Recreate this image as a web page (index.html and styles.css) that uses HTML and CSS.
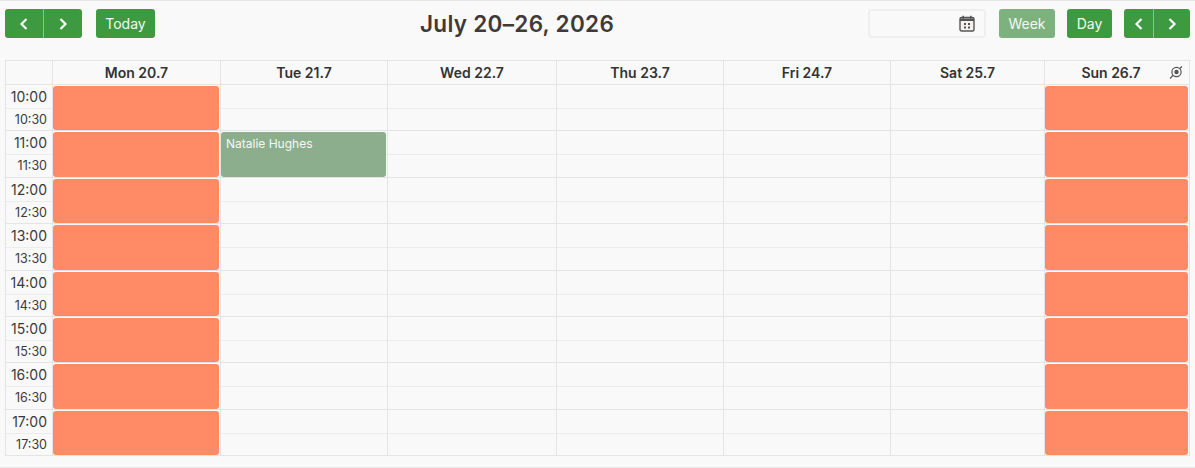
FILE: index.html
```html
<!DOCTYPE html>
<html lang="en">
<head>
    <meta charset="UTF-8">
    <meta name="viewport" content="width=device-width, initial-scale=1.0">
    <title>Calendar</title>
    <link rel="stylesheet" href="styles.css">
</head>
<body>
    <div class="page">
        <div class="toolbar">
            <div class="btn-group">
                <button class="btn btn-prev"><svg width="10" height="14" viewBox="0 0 10 14"><path d="M7.5 2 2.5 7l5 5" /></svg></button>
                <button class="btn btn-next"><svg width="10" height="14" viewBox="0 0 10 14"><path d="M2.5 2l5 5-5 5" /></svg></button>
            </div>
            <button class="btn btn-today">Today</button>
            <h1 class="title">July 20–26, 2026</h1>
            <div class="date-input">
                <svg width="16" height="17" viewBox="0 0 16 17">
                    <rect x="1" y="2.5" width="14" height="13.5" rx="1.5" fill="#f5f2ee" stroke="#555" stroke-width="1.4" />
                    <path d="M1 3.5h14v2.5H1z" fill="#555" />
                    <path d="M4.2 .8v3M11.8 .8v3" stroke="#555" stroke-width="1.6" />
                    <path d="M5 8h2v2H5zM9 8h2v2H9zM5 11.5h2v2H5zM9 11.5h2v2H9z" fill="#555" />
                </svg>
            </div>
            <button class="btn btn-week">Week</button>
            <button class="btn btn-day">Day</button>
            <div class="btn-group">
                <button class="btn btn-prev btn-prev-small"><svg width="10" height="14" viewBox="0 0 10 14"><path d="M7.5 2 2.5 7l5 5" /></svg></button>
                <button class="btn btn-next btn-next-small"><svg width="10" height="14" viewBox="0 0 10 14"><path d="M2.5 2l5 5-5 5" /></svg></button>
            </div>
        </div>

        <div class="calendar">
            <div class="col col-time">
                <div class="col-head"></div>
                <div class="hour"><span class="time">10:00</span><span class="time time-half">10:30</span></div>
                <div class="hour"><span class="time">11:00</span><span class="time time-half">11:30</span></div>
                <div class="hour"><span class="time">12:00</span><span class="time time-half">12:30</span></div>
                <div class="hour"><span class="time">13:00</span><span class="time time-half">13:30</span></div>
                <div class="hour"><span class="time">14:00</span><span class="time time-half">14:30</span></div>
                <div class="hour"><span class="time">15:00</span><span class="time time-half">15:30</span></div>
                <div class="hour"><span class="time">16:00</span><span class="time time-half">16:30</span></div>
                <div class="hour"><span class="time">17:00</span><span class="time time-half">17:30</span></div>
            </div>
            <div class="col col-mon">
                <div class="col-head">Mon 20.7</div>
                <div class="hour"><div class="closed"></div></div>
                <div class="hour"><div class="closed"></div></div>
                <div class="hour"><div class="closed"></div></div>
                <div class="hour"><div class="closed"></div></div>
                <div class="hour"><div class="closed"></div></div>
                <div class="hour"><div class="closed"></div></div>
                <div class="hour"><div class="closed"></div></div>
                <div class="hour"><div class="closed"></div></div>
            </div>
            <div class="col col-tue">
                <div class="col-head">Tue 21.7</div>
                <div class="hour"></div>
                <div class="hour"><div class="booking">Natalie Hughes</div></div>
                <div class="hour"></div>
                <div class="hour"></div>
                <div class="hour"></div>
                <div class="hour"></div>
                <div class="hour"></div>
                <div class="hour"></div>
            </div>
            <div class="col col-wed">
                <div class="col-head">Wed 22.7</div>
                <div class="hour"></div>
                <div class="hour"></div>
                <div class="hour"></div>
                <div class="hour"></div>
                <div class="hour"></div>
                <div class="hour"></div>
                <div class="hour"></div>
                <div class="hour"></div>
            </div>
            <div class="col col-thu">
                <div class="col-head">Thu 23.7</div>
                <div class="hour"></div>
                <div class="hour"></div>
                <div class="hour"></div>
                <div class="hour"></div>
                <div class="hour"></div>
                <div class="hour"></div>
                <div class="hour"></div>
                <div class="hour"></div>
            </div>
            <div class="col col-fri">
                <div class="col-head">Fri 24.7</div>
                <div class="hour"></div>
                <div class="hour"></div>
                <div class="hour"></div>
                <div class="hour"></div>
                <div class="hour"></div>
                <div class="hour"></div>
                <div class="hour"></div>
                <div class="hour"></div>
            </div>
            <div class="col col-sat">
                <div class="col-head">Sat 25.7</div>
                <div class="hour"></div>
                <div class="hour"></div>
                <div class="hour"></div>
                <div class="hour"></div>
                <div class="hour"></div>
                <div class="hour"></div>
                <div class="hour"></div>
                <div class="hour"></div>
            </div>
            <div class="col col-sun">
                <div class="col-head col-head-sync">Sun 26.7
                    <svg class="sync" width="14" height="15" viewBox="0 0 14 15" fill="none" stroke="#555" stroke-width="1.2">
                        <circle cx="7.5" cy="7" r="4.6" />
                        <path d="M1 13.5 4.2 10.2M10.5 3.8 13 1.5" />
                        <circle cx="7.5" cy="7" r="1.6" fill="#555" />
                    </svg>
                </div>
                <div class="hour"><div class="closed"></div></div>
                <div class="hour"><div class="closed"></div></div>
                <div class="hour"><div class="closed"></div></div>
                <div class="hour"><div class="closed"></div></div>
                <div class="hour"><div class="closed"></div></div>
                <div class="hour"><div class="closed"></div></div>
                <div class="hour"><div class="closed"></div></div>
                <div class="hour"><div class="closed"></div></div>
            </div>
        </div>
    </div>
</body>
</html>
```

FILE: styles.css
```css
html, body {
    margin: 0;
    height: 100%;
}
body {
    font-family: "Inter", "Open Sans", sans-serif;
    background-color: #f9f9f9;
    color: #333;
    overflow: hidden;
}
.page {
    height: 468px;
    box-sizing: border-box;
    padding: 8px 5px 0 5px;
    border-top: 1px solid #e6e6e6;
    border-bottom: 1px solid #e6e6e6;
}
.toolbar {
    display: flex;
    align-items: center;
    height: 29px;
    margin-bottom: 22px;
}
.title {
    margin: 0 auto 0 265px;
    font-size: 22.5px;
    font-weight: 600;
    color: #3f3a36;
    letter-spacing: 0.3px;
}
.btn {
    height: 29px;
    padding: 0;
    border: none;
    border-radius: 3px;
    background-color: #3d9a40;
    color: #f4f8f2;
    font-family: "Inter", sans-serif;
    font-size: 14px;
    display: flex;
    align-items: center;
    justify-content: center;
}
.btn svg {
    fill: none;
    stroke: #f8fbf6;
    stroke-width: 2.2;
}
.btn-group {
    display: flex;
}
.btn-prev {
    width: 39px;
    border-radius: 3px 0 0 3px;
    border-right: 1px solid #8fc091;
}
.btn-next {
    width: 38px;
    border-radius: 0 3px 3px 0;
}
.btn-prev-small {
    width: 30px;
}
.btn-next-small {
    width: 36px;
}
.btn-today {
    width: 59px;
    margin-left: 14px;
}
.date-input {
    width: 118px;
    height: 29px;
    box-sizing: border-box;
    border: 2px solid #eeeeee;
    border-radius: 4px;
    display: flex;
    align-items: center;
    justify-content: flex-end;
    padding-right: 9px;
}
.btn-week {
    width: 56px;
    margin-left: 13px;
    background-color: #7db27f;
}
.btn-day {
    width: 45px;
    margin-left: 12px;
    margin-right: 12px;
}
.calendar {
    display: flex;
    width: 1185px;
    border: solid #e4e4e4;
    border-width: 1px 0 0 1px;
}
.col {
    box-sizing: border-box;
    border-right: 1px solid #e4e4e4;
}
.col-time { width: 47px; }
.col-mon { width: 168px; }
.col-tue { width: 167px; }
.col-wed { width: 169px; }
.col-thu { width: 167px; }
.col-fri { width: 167px; }
.col-sat { width: 154px; }
.col-sun { width: 145px; }
.col-head {
    height: 24px;
    box-sizing: border-box;
    border-bottom: 1px solid #e4e4e4;
    display: flex;
    align-items: center;
    justify-content: center;
    font-size: 14px;
    font-weight: 600;
    position: relative;
}
.col-head-sync {
    padding-right: 12px;
}
.sync {
    position: absolute;
    right: 6px;
    top: 4px;
}
.hour {
    height: 46.375px;
    box-sizing: border-box;
    border-bottom: 1px solid #e4e4e4;
    position: relative;
}
.hour::after {
    content: "";
    position: absolute;
    left: 0;
    right: 0;
    top: 23px;
    border-top: 1px solid #ececec;
}
.col-time .hour {
    display: flex;
    flex-direction: column;
    align-items: flex-end;
    padding-right: 5px;
}
.time {
    height: 23px;
    line-height: 23px;
    font-size: 14px;
    color: #3a3a3a;
}
.time-half {
    font-size: 12.5px;
}
.closed,
.booking {
    position: absolute;
    inset: 1px 1px 0 0;
    z-index: 1;
    border-radius: 3px;
}
.closed {
    background-color: #ff8a65;
}
.booking {
    background-color: #8cae8c;
    color: #f6f8f4;
    font-size: 12px;
    padding: 4px 5px;
}
```
